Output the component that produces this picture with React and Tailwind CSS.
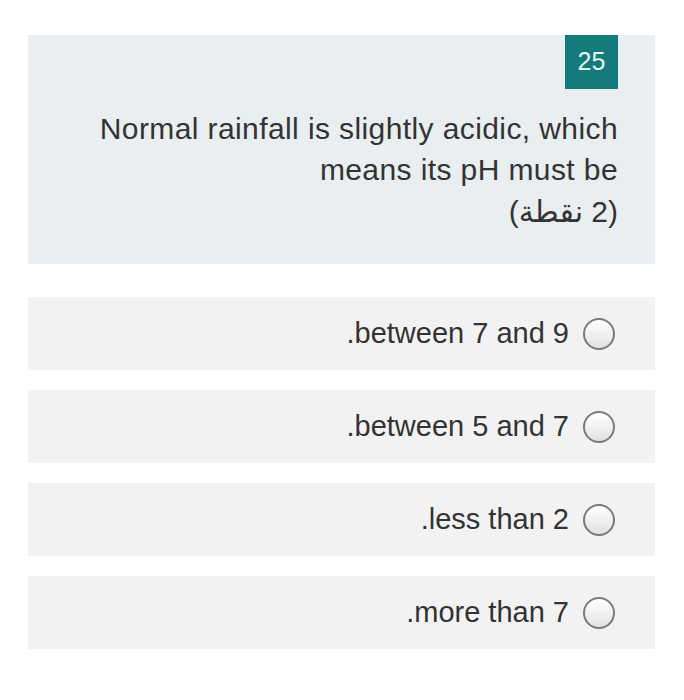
const OPTIONS = [".between 7 and 9", ".between 5 and 7", ".less than 2", ".more than 7"];

function Radio() {
  return (
    <span className="w-[32px] h-[32px] shrink-0 rounded-full border-2 border-[#7a7a7a] bg-gradient-to-b from-white to-[#e2e2e2]" />
  );
}

export default function App() {
  return (
    <div
      className="w-[684px] h-[700px] bg-white pt-[35px] pl-[28px] text-[#333333]"
      style={{ fontFamily: "'Liberation Sans', 'DejaVu Sans', Arial, sans-serif" }}
    >
      <div className="w-[627px] flex flex-col gap-[33px]">
        {/* Question header */}
        <div className="bg-[#e9eef1] pr-[37px] pb-[32px] flex flex-col items-end">
          <div className="w-[53px] h-[54px] bg-[#137b7b] text-[#e6f4f4] text-[25px] flex items-center justify-center">
            25
          </div>
          <div className="mt-[19px] text-[30px] tracking-[0.4px] leading-[41px] text-right whitespace-nowrap">
            <div>Normal rainfall is slightly acidic, which</div>
            <div>means its pH must be</div>
            <div dir="rtl" className="mt-[1px]">(2 نقطة)</div>
          </div>
        </div>

        {/* Options */}
        <div className="flex flex-col gap-[20px]">
          {OPTIONS.map((o) => (
            <div
              key={o}
              className="h-[73px] bg-[#f2f2f2] flex items-center justify-end gap-[14px] pr-[40px] text-[29px]"
            >
              <span>{o}</span>
              <Radio />
            </div>
          ))}
        </div>
      </div>
    </div>
  );
}
